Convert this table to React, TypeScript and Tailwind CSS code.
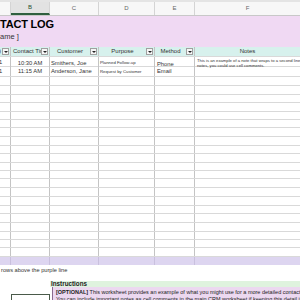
const cols = "grid grid-cols-[11px_39px_49px_56px_40px_105px]";

const rowHeights = [9, 9, 8, 9, 8, 8, 9, 9, 8, 9, 8, 8, 9, 9, 9, 8, 9, 9, 8, 8, 9];

function Drop() {
  return (
    <span className="flex h-[7px] w-[7px] shrink-0 items-center justify-center border border-[#a0a0a0] bg-[#f6f6f6]">
      <span className="h-0 w-0 border-x-[2px] border-t-[2px] border-x-transparent border-t-[#222]" />
    </span>
  );
}

function HeadCell({ label, center, drop = true }: { label: string; center?: boolean; drop?: boolean }) {
  return (
    <div className="flex items-center overflow-hidden border-r border-[#c4c4c4] pr-[1px]">
      <span
        className={
          center
            ? "flex-1 overflow-hidden whitespace-nowrap text-center"
            : "flex-1 overflow-hidden whitespace-nowrap pl-[2px]"
        }
      >
        {label}
      </span>
      {drop ? <Drop /> : null}
    </div>
  );
}

function EmptyCells({ line }: { line: string }) {
  return (
    <>
      <div className={`border-r ${line}`} />
      <div className={`border-r ${line}`} />
      <div className={`border-r ${line}`} />
      <div className={`border-r ${line}`} />
      <div className={`border-r ${line}`} />
      <div />
    </>
  );
}

export default function App() {
  return (
    <div className="flex h-[300px] w-[300px] flex-col overflow-hidden bg-white font-['Liberation_Sans',Arial,sans-serif] text-[#222]">
      <div className="h-[2px] bg-[#e4e4e4]" />

      <div className={`${cols} h-[14px] border-b border-[#c8c8c8] bg-[#f7f7f7] text-[6px] text-[#666]`}>
        <div className="border-r border-[#d4d4d4]" />
        <div className="flex items-center justify-center border-r border-b-2 border-[#d4d4d4] border-b-[#2f5f3f] bg-[#e2e2e2] text-[#1f5131]">
          B
        </div>
        <div className="flex items-center justify-center border-r border-[#d4d4d4]">C</div>
        <div className="flex items-center justify-center border-r border-[#d4d4d4]">D</div>
        <div className="flex items-center justify-center border-r border-[#d4d4d4]">E</div>
        <div className="flex items-center justify-center">F</div>
      </div>

      <div className="flex h-[31px] flex-col bg-[#f0d9f3]">
        <div className="pt-[2px] text-[11px] leading-[12px] font-bold tracking-[-0.2px] text-black">TACT LOG</div>
        <div className="pt-[2px] text-[7.5px] leading-[9px] text-[#333]">ame ]</div>
      </div>

      <div className={`${cols} h-[9px] bg-[#d7f1ed] text-[6px] leading-[9px] text-[#333]`}>
        <div className="flex items-center justify-end overflow-hidden border-r border-[#c4c4c4] pr-[1px]">
          <span className="mr-[1px]">)</span>
          <Drop />
        </div>
        <HeadCell label="Contact Time" />
        <HeadCell label="Customer" center />
        <HeadCell label="Purpose" center />
        <HeadCell label="Method" center />
        <div className="text-center">Notes</div>
      </div>

      <div className={`${cols} h-[11px] border-y border-[#d9d9d9] text-[5.8px] leading-[10px] text-[#333]`}>
        <div className="overflow-hidden border-r border-[#c4c4c4] whitespace-nowrap">
          <span className="-ml-[1px]">1</span>
        </div>
        <div className="border-r border-[#c4c4c4] pt-[1px] text-center">10:30 AM</div>
        <div className="overflow-hidden border-r border-[#c4c4c4] pt-[1px] pl-[1px] whitespace-nowrap">Smithers, Joe</div>
        <div className="overflow-hidden border-r border-[#c4c4c4] pt-[1px] pl-[1px] text-[4.3px] whitespace-nowrap">
          Planned Follow-up
        </div>
        <div className="border-r border-[#c4c4c4] pt-[2px] pl-[2px]">Phone</div>
        <div className="overflow-hidden pt-[1px] pl-[2px] text-[4.2px] leading-[5px] whitespace-nowrap">
          <div>This is an example of a note that wraps to a second line. For longer</div>
          <div>notes, you could use cell comments.</div>
        </div>
      </div>

      <div className={`${cols} h-[10px] border-b border-[#d9d9d9] text-[5.8px] leading-[9px] text-[#333]`}>
        <div className="overflow-hidden border-r border-[#c4c4c4] whitespace-nowrap">
          <span className="-ml-[1px]">1</span>
        </div>
        <div className="border-r border-[#c4c4c4] text-center">11:15 AM</div>
        <div className="overflow-hidden border-r border-[#c4c4c4] pl-[1px] whitespace-nowrap">Anderson, Jane</div>
        <div className="overflow-hidden border-r border-[#c4c4c4] pl-[1px] text-[4.3px] whitespace-nowrap">
          Request by Customer
        </div>
        <div className="border-r border-[#c4c4c4] pl-[2px]">Email</div>
        <div />
      </div>

      {rowHeights.map((h, i) => (
        <div key={i} className={`${cols} border-b border-[#d9d9d9]`} style={{ height: h }}>
          <EmptyCells line="border-[#c4c4c4]" />
        </div>
      ))}

      <div className={`${cols} h-[8px] bg-[#ddd5f0]`}>
        <EmptyCells line="border-[#c9c0de]" />
      </div>

      <div className="h-[11px] pl-[1px] text-[5.7px] leading-[11px] text-[#333]">rows above the purple line</div>
      <div className="h-[5px]" />

      <div className="flex min-h-0 flex-1">
        <div className="flex w-[50px] shrink-0 flex-col">
          <div className="h-[13px]" />
          <div className="ml-[11px] flex-1 border-t border-l border-r border-[#4a5a4a] bg-white" />
        </div>
        <div className="flex min-w-0 flex-1 flex-col overflow-hidden">
          <div className="h-[6px] bg-[#dff3de] pl-[1px] text-[6.3px] leading-[6px] font-bold text-[#222]">Instructions</div>
          <div className="ml-[2px] flex-1 border-l border-[#8a6b8f] bg-[#ecd8f0] pl-[3px] pt-[2px] text-[5.5px] leading-[7px] whitespace-nowrap text-[#222]">
            <div>
              <span className="font-bold">[OPTIONAL]</span> This worksheet provides an example of what you might use for a more detailed contact log.
            </div>
            <div>You can include important notes as cell comments in the main CRM worksheet if keeping this detail is not needed.</div>
          </div>
        </div>
      </div>
    </div>
  );
}
